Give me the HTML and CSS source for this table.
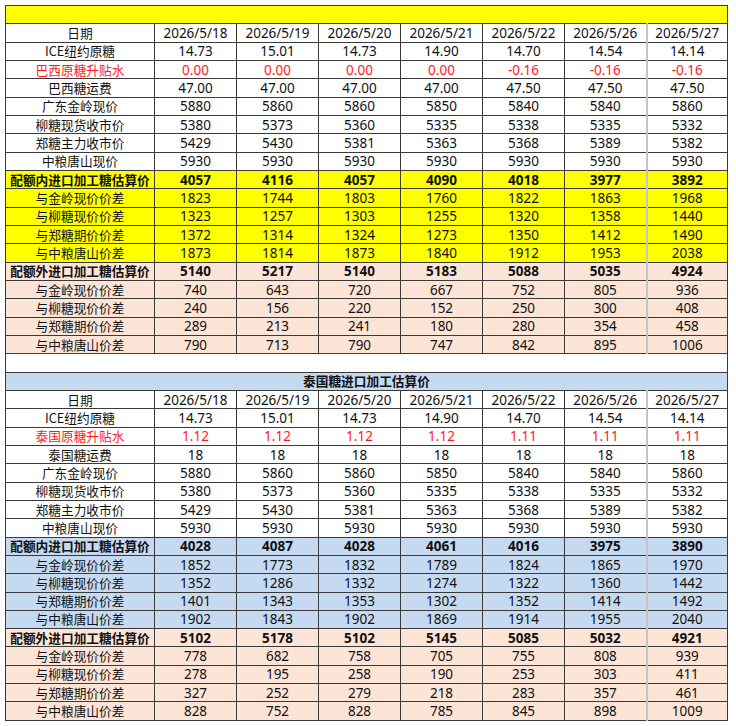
FILE: index.html
```html
<!DOCTYPE html>
<html lang="zh-CN">
<head>
<meta charset="utf-8">
<title>进口加工糖估算价</title>
<link rel="stylesheet" href="styles.css">
</head>
<body>
<table class="sheet">
<colgroup>
<col class="c-label"><col class="c-num"><col class="c-num"><col class="c-num"><col class="c-num"><col class="c-num"><col class="c-num"><col class="c-last">
</colgroup>
<tbody>
<tr class="y title"><td colspan="8"></td></tr>
<tr><td>日期</td><td>2026/5/18</td><td>2026/5/19</td><td>2026/5/20</td><td>2026/5/21</td><td>2026/5/22</td><td>2026/5/26</td><td>2026/5/27</td></tr>
<tr><td>ICE纽约原糖</td><td>14.73</td><td>15.01</td><td>14.73</td><td>14.90</td><td>14.70</td><td>14.54</td><td>14.14</td></tr>
<tr class="red"><td>巴西原糖升贴水</td><td>0.00</td><td>0.00</td><td>0.00</td><td>0.00</td><td>-0.16</td><td>-0.16</td><td>-0.16</td></tr>
<tr><td>巴西糖运费</td><td>47.00</td><td>47.00</td><td>47.00</td><td>47.00</td><td>47.50</td><td>47.50</td><td>47.50</td></tr>
<tr><td>广东金岭现价</td><td>5880</td><td>5860</td><td>5860</td><td>5850</td><td>5840</td><td>5840</td><td>5860</td></tr>
<tr><td>柳糖现货收市价</td><td>5380</td><td>5373</td><td>5360</td><td>5335</td><td>5338</td><td>5335</td><td>5332</td></tr>
<tr><td>郑糖主力收市价</td><td>5429</td><td>5430</td><td>5381</td><td>5363</td><td>5368</td><td>5389</td><td>5382</td></tr>
<tr><td>中粮唐山现价</td><td>5930</td><td>5930</td><td>5930</td><td>5930</td><td>5930</td><td>5930</td><td>5930</td></tr>
<tr class="y bold"><td>配额内进口加工糖估算价</td><td>4057</td><td>4116</td><td>4057</td><td>4090</td><td>4018</td><td>3977</td><td>3892</td></tr>
<tr class="y"><td>与金岭现价价差</td><td>1823</td><td>1744</td><td>1803</td><td>1760</td><td>1822</td><td>1863</td><td>1968</td></tr>
<tr class="y"><td>与柳糖现价价差</td><td>1323</td><td>1257</td><td>1303</td><td>1255</td><td>1320</td><td>1358</td><td>1440</td></tr>
<tr class="y"><td>与郑糖期价价差</td><td>1372</td><td>1314</td><td>1324</td><td>1273</td><td>1350</td><td>1412</td><td>1490</td></tr>
<tr class="y"><td>与中粮唐山价差</td><td>1873</td><td>1814</td><td>1873</td><td>1840</td><td>1912</td><td>1953</td><td>2038</td></tr>
<tr class="p bold"><td>配额外进口加工糖估算价</td><td>5140</td><td>5217</td><td>5140</td><td>5183</td><td>5088</td><td>5035</td><td>4924</td></tr>
<tr class="p"><td>与金岭现价价差</td><td>740</td><td>643</td><td>720</td><td>667</td><td>752</td><td>805</td><td>936</td></tr>
<tr class="p"><td>与柳糖现价价差</td><td>240</td><td>156</td><td>220</td><td>152</td><td>250</td><td>300</td><td>408</td></tr>
<tr class="p"><td>与郑糖期价价差</td><td>289</td><td>213</td><td>241</td><td>180</td><td>280</td><td>354</td><td>458</td></tr>
<tr class="p"><td>与中粮唐山价差</td><td>790</td><td>713</td><td>790</td><td>747</td><td>842</td><td>895</td><td>1006</td></tr>
<tr class="gap"><td colspan="8"></td></tr>
<tr class="b title bold"><td colspan="8">泰国糖进口加工估算价</td></tr>
<tr><td>日期</td><td>2026/5/18</td><td>2026/5/19</td><td>2026/5/20</td><td>2026/5/21</td><td>2026/5/22</td><td>2026/5/26</td><td>2026/5/27</td></tr>
<tr><td>ICE纽约原糖</td><td>14.73</td><td>15.01</td><td>14.73</td><td>14.90</td><td>14.70</td><td>14.54</td><td>14.14</td></tr>
<tr class="red"><td>泰国原糖升贴水</td><td>1.12</td><td>1.12</td><td>1.12</td><td>1.12</td><td>1.11</td><td>1.11</td><td>1.11</td></tr>
<tr><td>泰国糖运费</td><td>18</td><td>18</td><td>18</td><td>18</td><td>18</td><td>18</td><td>18</td></tr>
<tr><td>广东金岭现价</td><td>5880</td><td>5860</td><td>5860</td><td>5850</td><td>5840</td><td>5840</td><td>5860</td></tr>
<tr><td>柳糖现货收市价</td><td>5380</td><td>5373</td><td>5360</td><td>5335</td><td>5338</td><td>5335</td><td>5332</td></tr>
<tr><td>郑糖主力收市价</td><td>5429</td><td>5430</td><td>5381</td><td>5363</td><td>5368</td><td>5389</td><td>5382</td></tr>
<tr><td>中粮唐山现价</td><td>5930</td><td>5930</td><td>5930</td><td>5930</td><td>5930</td><td>5930</td><td>5930</td></tr>
<tr class="b bold"><td>配额内进口加工糖估算价</td><td>4028</td><td>4087</td><td>4028</td><td>4061</td><td>4016</td><td>3975</td><td>3890</td></tr>
<tr class="b"><td>与金岭现价价差</td><td>1852</td><td>1773</td><td>1832</td><td>1789</td><td>1824</td><td>1865</td><td>1970</td></tr>
<tr class="b"><td>与柳糖现价价差</td><td>1352</td><td>1286</td><td>1332</td><td>1274</td><td>1322</td><td>1360</td><td>1442</td></tr>
<tr class="b"><td>与郑糖期价价差</td><td>1401</td><td>1343</td><td>1353</td><td>1302</td><td>1352</td><td>1414</td><td>1492</td></tr>
<tr class="b"><td>与中粮唐山价差</td><td>1902</td><td>1843</td><td>1902</td><td>1869</td><td>1914</td><td>1955</td><td>2040</td></tr>
<tr class="p bold"><td>配额外进口加工糖估算价</td><td>5102</td><td>5178</td><td>5102</td><td>5145</td><td>5085</td><td>5032</td><td>4921</td></tr>
<tr class="p"><td>与金岭现价价差</td><td>778</td><td>682</td><td>758</td><td>705</td><td>755</td><td>808</td><td>939</td></tr>
<tr class="p"><td>与柳糖现价价差</td><td>278</td><td>195</td><td>258</td><td>190</td><td>253</td><td>303</td><td>411</td></tr>
<tr class="p"><td>与郑糖期价价差</td><td>327</td><td>252</td><td>279</td><td>218</td><td>283</td><td>357</td><td>461</td></tr>
<tr class="p"><td>与中粮唐山价差</td><td>828</td><td>752</td><td>828</td><td>785</td><td>845</td><td>898</td><td>1009</td></tr>
</tbody>
</table>
</body>
</html>
```

FILE: styles.css
```css
html, body {
  margin: 0;
  padding: 0;
  background: #ffffff;
}
body {
  padding: 5px 0 0 5px;
  font-family: "Noto Sans", "Noto Sans CJK SC", sans-serif;
  color: #111111;
}
.sheet {
  border-collapse: collapse;
  table-layout: fixed;
  width: 722px;
}
.c-label { width: 149px; }
.c-num { width: 82px; }
.c-last { width: 81px; }
.sheet td {
  border: 1px solid #3a3a3a;
  height: 17.33px;
  padding: 0;
  text-align: center;
  vertical-align: middle;
  font-size: 13.5px;
  line-height: 16px;
  white-space: nowrap;
  overflow: hidden;
}
.sheet td:first-child {
  font-family: "Noto Sans CJK SC", "Noto Sans", sans-serif;
  font-size: 12.7px;
}
.sheet td:nth-child(8) {
  border-left: 2px solid #c4c4c4;
}
.sheet .title td {
  font-family: "Noto Sans CJK SC", "Noto Sans", sans-serif;
  font-size: 12.7px;
}
.y td { background: #ffff00; }
.p td { background: #fce4d6; }
.b td { background: #c5d9f1; }
.red td { color: #ff1a1a; }
.bold td { font-weight: 700; }
.gap td { background: #ffffff; }
```
